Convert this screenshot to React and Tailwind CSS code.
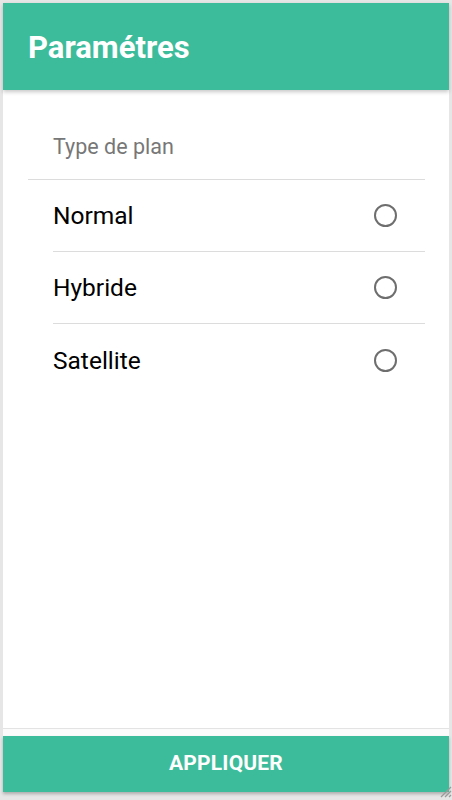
import React from "react";

function Radio() {
  return (
    <span className="block h-[23px] w-[23px] rounded-full border-[2.5px] border-[#6e6e6e]" />
  );
}

export default function App() {
  const items = ["Normal", "Hybride", "Satellite"];
  return (
    <div
      className="flex h-[800px] w-[452px] flex-col bg-[#e6e6e6] pt-[3px] pl-[3px] pr-[3px] pb-[8px]"
      style={{ fontFamily: "Roboto, 'Noto Sans', sans-serif" }}
    >
      <div className="flex flex-1 flex-col bg-white">
        <header className="relative z-10 flex h-[87px] items-center bg-[#3dbc9b] px-[25px] pt-[2px] shadow-[0_2px_4px_rgba(0,0,0,0.22)]">
          <h1 className="text-[31px] font-bold leading-none text-white">Paramétres</h1>
        </header>

        <main className="flex-1">
          <div className="ml-[25px] mr-[24px]">
            <div className="h-[90px] border-b border-[#dcdcdc] pl-[25px] pt-[43px]">
              <span className="text-[21.5px] leading-[28px] text-[#777777]">Type de plan</span>
            </div>
            {items.map((label, i) => (
              <div
                key={label}
                className={
                  i < items.length - 1
                    ? "ml-[25px] flex h-[72px] items-center justify-between border-b border-[#dcdcdc] pr-[28px]"
                    : "ml-[25px] flex h-[72px] items-center justify-between pr-[28px]"
                }
              >
                <span className="pt-[2px] text-[24.5px] text-black">{label}</span>
                <Radio />
              </div>
            ))}
          </div>
        </main>

        <footer className="border-t border-[#e3e3e3] bg-[#fbfbfb] pt-[7px]">
          <button className="relative flex h-[56px] w-full items-center justify-center bg-[#3dbc9b] shadow-[0_2px_3px_rgba(0,0,0,0.25)]">
            <span className="text-[21px] font-bold tracking-[0.2px] text-white">APPLIQUER</span>
            <svg className="absolute bottom-[-6px] right-[-3px]" width="14" height="14" viewBox="0 0 14 14">
              <path d="M13 3 L3 13 M13 7 L7 13 M13 11 L11 13" stroke="#9a9a9a" strokeWidth="1.3" />
            </svg>
          </button>
        </footer>
      </div>
    </div>
  );
}
